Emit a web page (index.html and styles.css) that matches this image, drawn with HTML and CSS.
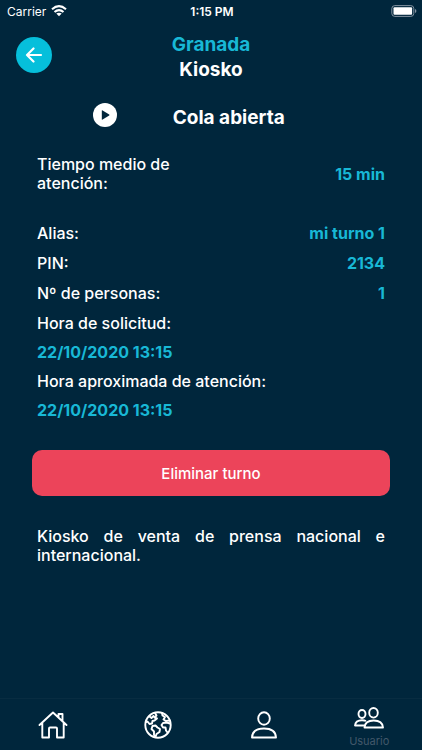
FILE: index.html
```html
<!DOCTYPE html>
<html lang="es">
<head>
<meta charset="utf-8">
<meta name="viewport" content="width=device-width, initial-scale=1">
<title>Kiosko</title>
<link rel="stylesheet" href="styles.css">
</head>
<body>
<div class="status">
  <div class="carrier">Carrier
    <svg width="16" height="12" viewBox="0 0 16 12" aria-hidden="true"><g fill="none" stroke="#fff" stroke-width="2.1"><path d="M1 4.2Q8-1.8 15 4.2"/><path d="M3.500 7Q8 3.200 12.500 7"/></g><path d="M5.300 8.600Q8 6.700 10.700 8.600L8 11.300Z" fill="#fff"/></svg>
  </div>
  <div class="clock">1:15 PM</div>
  <div class="battery">
    <svg width="26" height="12" viewBox="0 0 26 12" aria-hidden="true"><rect x=".8" y=".6" width="22" height="10.800" rx="3" fill="none" stroke="#8292a0"/><rect x="2.500" y="2.200" width="18.600" height="7.600" rx="1" fill="#fff"/><path d="M24 4v4q1.400-.6 1.400-2T24 4Z" fill="#8292a0"/></svg>
  </div>
</div>
<header class="header">
  <button class="back" type="button" aria-label="Volver">
    <svg width="18" height="16" viewBox="0 0 18 16" fill="none" stroke="#fff" stroke-width="2.200" stroke-linecap="round" stroke-linejoin="round"><path d="M16 8H2M8.500 1.500 2 8 8.500 14.500"/></svg>
  </button>
  <h1 class="title"><span class="city">Granada</span><span>Kiosko</span></h1>
</header>
<main class="content">
  <div class="queue">
    <svg class="play" width="24" height="24" viewBox="0 0 24 24" aria-hidden="true"><circle cx="12" cy="12" r="12" fill="#fff"/><path d="M8.800 7.800v8.400q0 .8.800.4l6.600-4.100q.6-.5 0-1L9.600 7.400q-.8-.4-.8.4Z" fill="#00263c"/></svg>
    <h2 class="state">Cola abierta</h2>
  </div>
  <dl class="details">
    <div class="row average"><dt>Tiempo medio de atención:</dt><dd>15 min</dd></div>
    <div class="row"><dt>Alias:</dt><dd>mi turno 1</dd></div>
    <div class="row"><dt>PIN:</dt><dd>2134</dd></div>
    <div class="row"><dt>Nº de personas:</dt><dd>1</dd></div>
    <div class="stack"><dt>Hora de solicitud:</dt><dd>22/10/2020 13:15</dd></div>
    <div class="stack"><dt>Hora aproximada de atención:</dt><dd>22/10/2020 13:15</dd></div>
  </dl>
  <button class="delete" type="button">Eliminar turno</button>
  <p class="description">Kiosko de venta de prensa nacional e internacional.</p>
</main>
<nav class="tabs">
  <a class="tab" href="#inicio" aria-label="Inicio">
    <svg width="30" height="28" viewBox="0 0 30 28" fill="none" stroke="#fff" stroke-width="1.900" stroke-linecap="round" stroke-linejoin="round"><path d="M1.500 14 15 1.500 28.500 14M4.300 12v14.500h6.700V17.500q0-1 1-1h6q1 0 1 1v9h6.700V12M20.500 6V3h4v7"/></svg>
  </a>
  <a class="tab" href="#mundo" aria-label="Mundo">
    <svg width="28" height="28" viewBox="0 0 28 28" fill="none" stroke="#fff" stroke-width="1.900" stroke-linecap="round" stroke-linejoin="round"><circle cx="14" cy="14" r="12.700"/><path d="M11 2 12.500 4.500 10.500 6.500 13 7.500 10.500 9.500 8.500 10 8 12.500 5.500 13 3.500 10.500 2.500 11M5.500 5.500 7.500 7 9.500 5M8.500 15 11.500 14.500 13.500 16.500 16 18 15.500 21 12.500 23 11.500 26 10 24 10 20.500 7.500 18ZM18 2 18.500 4.500 21 6 19.500 8.500 22 10 25.500 9.500M26 12.500 22.500 11.500 19 12 17.500 14 19 16.500 21.500 16.500 22 19.500 23.500 21.500"/></svg>
  </a>
  <a class="tab" href="#perfil" aria-label="Perfil">
    <svg width="28" height="28" viewBox="0 0 28 28" fill="none" stroke="#fff" stroke-width="1.900" stroke-linejoin="round"><ellipse cx="14" cy="7.500" rx="5.800" ry="6.300"/><path d="M2 26.500Q2.500 17.500 14 17.500T26 26.500Z"/></svg>
  </a>
  <a class="tab labelled" href="#usuario">
    <svg width="30" height="22" viewBox="0 0 30 22" fill="none" stroke="#fff" stroke-width="1.900" stroke-linejoin="round" aria-hidden="true"><ellipse cx="19.500" cy="5.800" rx="4.300" ry="4.800"/><path d="M10.500 20.500Q11 13.500 19.700 13.500T29 20.500Z"/><ellipse cx="8" cy="7" rx="3.500" ry="4"/><path d="M12 14Q10.500 13.300 8 13.300 1.500 13.300 1 18.500H10.500"/></svg>
    <span>Usuario</span>
  </a>
</nav>
</body>
</html>
```
FILE: styles.css
```css
* {
  box-sizing: border-box;
}

body {
  margin: 0;
  min-height: 100vh;
  display: flex;
  flex-direction: column;
  background: #00263c;
  color: #fff;
  font: 500 16px/19px Inter, "Liberation Sans", sans-serif;
}

h1,
h2,
p,
dl,
dd {
  margin: 0;
}

button {
  border: 0;
  padding: 0;
  color: inherit;
  font: inherit;
}

svg {
  display: block;
}

.status {
  display: grid;
  grid-template-columns: 1fr auto 1fr;
  align-items: center;
  height: 22px;
  padding: 0 5px 0 7px;
  font-size: 12px;
  font-weight: 400;
}

.carrier {
  display: flex;
  align-items: center;
  gap: 5px;
}

.clock {
  font-weight: 600;
}

.battery {
  justify-self: end;
}

.header {
  display: grid;
  grid-template-columns: 36px 1fr 36px;
  align-items: start;
  padding: 10px 16px;
}

.back {
  display: flex;
  align-items: center;
  justify-content: center;
  width: 36px;
  height: 36px;
  margin-top: 5px;
  border-radius: 50%;
  background: #06bfdb;
}

.title {
  display: flex;
  flex-direction: column;
  font-size: 19px;
  font-weight: 700;
  line-height: 25px;
  text-align: center;
}

.city,
dd {
  color: #18b8d6;
}

.content {
  flex: 1;
  display: flex;
  flex-direction: column;
  padding: 11px 32px;
}

.queue {
  display: grid;
  grid-template-columns: 39% 1fr;
  padding: 0 5px;
}

.play {
  justify-self: center;
}

.state {
  padding-top: 2px;
  font-size: 19px;
  font-weight: 700;
  line-height: 25px;
}

.details {
  display: flex;
  flex-direction: column;
  gap: 10px;
  padding: 25px 5px 30px;
}

.row {
  display: flex;
  align-items: center;
  justify-content: space-between;
}

.row + .row {
  padding-bottom: 1px;
}

.average {
  padding-bottom: 21px;
}

.average dt {
  width: 45%;
}

dd {
  font-weight: 700;
}

.stack {
  display: flex;
  flex-direction: column;
  gap: 10px;
}

.delete {
  height: 46px;
  border-radius: 10px;
  background: #ec445a;
  font-size: 15px;
}

.description {
  padding: 31px 5px 0;
  text-align: justify;
}

.tabs {
  display: grid;
  grid-template-columns: repeat(4, 1fr);
  height: 52px;
  border-top: 1px solid #082c41;
}

.tab {
  display: flex;
  flex-direction: column;
  align-items: center;
  justify-content: center;
  gap: 6px;
  color: #42586a;
  font-size: 11px;
  font-weight: 400;
  line-height: 13px;
  text-decoration: none;
}

.labelled {
  justify-content: flex-end;
  padding-bottom: 2px;
}
```
